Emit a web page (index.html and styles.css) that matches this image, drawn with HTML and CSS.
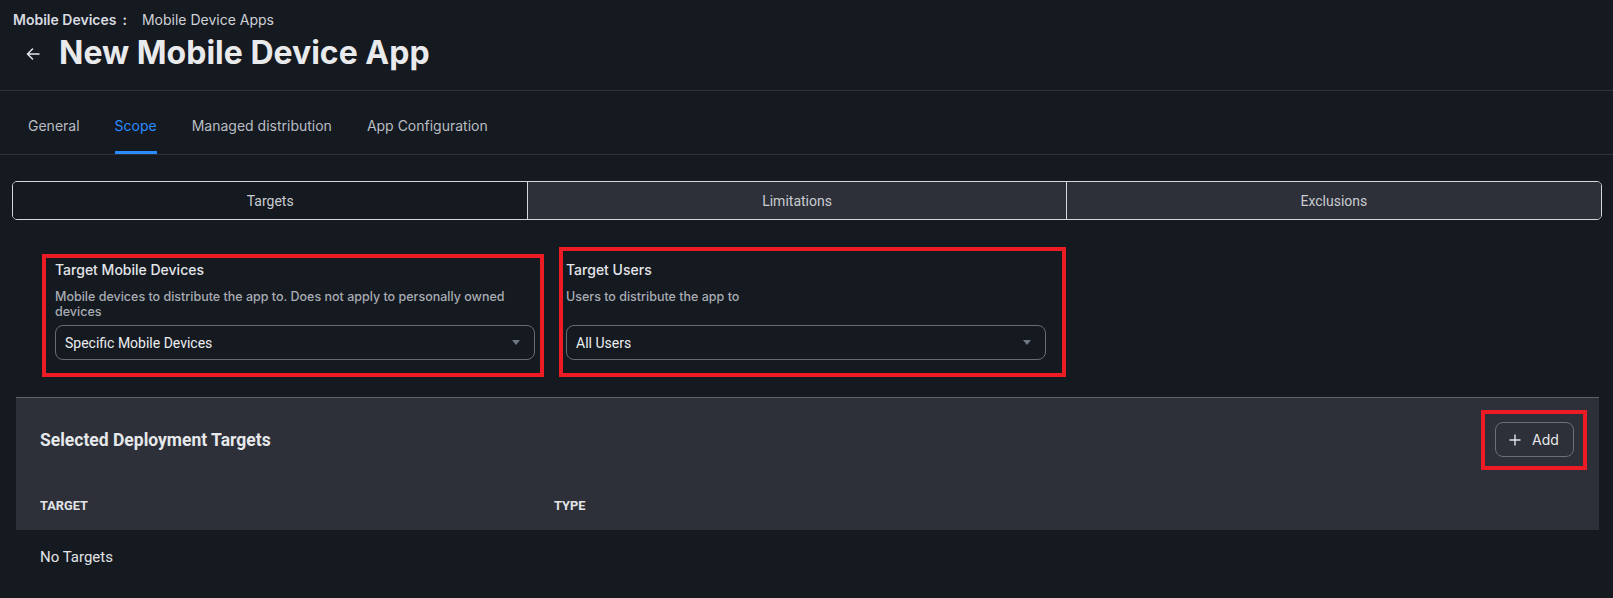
FILE: index.html
```html
<!DOCTYPE html>
<html lang="en">
<head>
<meta charset="utf-8">
<title>New Mobile Device App</title>
<link rel="stylesheet" href="styles.css">
</head>
<body>
<header class="header">
  <div class="crumbs"><span class="crumb-parent">Mobile Devices</span><span class="crumb-sep">:</span><span class="crumb-child">Mobile Device Apps</span></div>
  <div class="title-row">
    <svg class="back" width="14" height="12" viewBox="0 0 14 12" aria-hidden="true"><path d="M13 6H1.5M6.5 1L1.5 6l5 5" fill="none" stroke="#e4e6ea" stroke-width="1.5" stroke-linecap="round" stroke-linejoin="round"/></svg>
    <h1 class="title">New Mobile Device App</h1>
  </div>
</header>
<nav class="tabs">
  <div class="tab">General</div>
  <div class="tab active">Scope</div>
  <div class="tab">Managed distribution</div>
  <div class="tab">App Configuration</div>
</nav>
<div class="segmented">
  <div class="seg selected">Targets</div>
  <div class="seg">Limitations</div>
  <div class="seg">Exclusions</div>
</div>
<section class="fields">
  <div class="field">
    <div class="field-label">Target Mobile Devices</div>
    <div class="field-desc">Mobile devices to distribute the app to. Does not apply to personally owned devices</div>
    <div class="select"><span>Specific Mobile Devices</span><span class="caret"></span></div>
    <div class="mark mark-1"></div>
  </div>
  <div class="field">
    <div class="field-label">Target Users</div>
    <div class="field-desc">Users to distribute the app to</div>
    <div class="select"><span>All Users</span><span class="caret"></span></div>
    <div class="mark mark-2"></div>
  </div>
</section>
<section class="panel">
  <div class="panel-head">
    <h2 class="panel-title">Selected Deployment Targets</h2>
    <div class="add-wrap">
      <button class="add-btn"><svg width="12" height="12" viewBox="0 0 12 12" aria-hidden="true"><path d="M6 0.5v11M0.5 6h11" stroke="#e2e4e8" stroke-width="1.4" fill="none"/></svg><span>Add</span></button>
      <div class="mark mark-3"></div>
    </div>
  </div>
  <div class="table-head">
    <div>TARGET</div>
    <div>TYPE</div>
  </div>
</section>
<div class="empty">No Targets</div>
</body>
</html>
```
FILE: styles.css
```css
* { box-sizing: border-box; }
html, body { margin: 0; padding: 0; }
body {
  background: #151920;
  color: #e6e8eb;
  font-family: Inter, "Noto Sans", sans-serif;
  width: 1613px;
  height: 598px;
  overflow: hidden;
}
.header {
  padding: 10px 13px 19px;
  border-bottom: 1px solid #2e3239;
}
.crumbs {
  font-size: 14px;
  line-height: 20px;
  display: flex;
  align-items: center;
}
.crumb-parent { font-weight: 600; color: #d8dbe0; }
.crumb-sep { font-weight: 600; color: #d8dbe0; margin: 0 15px 0 6px; }
.crumb-child { color: #cfd2d7; }
.title-row {
  display: flex;
  align-items: center;
  margin-top: 5px;
  padding-left: 13px;
}
.back { flex: none; margin-right: 19px; margin-top: 2px; }
.title {
  margin: 0;
  font-size: 32px;
  line-height: 36px;
  font-weight: 700;
  color: #e9eaec;
}
.tabs {
  display: flex;
  gap: 35px;
  padding-left: 28px;
  border-bottom: 1px solid #2e3239;
  height: 64px;
}
.tab {
  font-size: 14px;
  line-height: 20px;
  padding-top: 25px;
  color: #b9bdc3;
  border-bottom: 3px solid transparent;
}
.tab.active { color: #2b8cff; border-bottom-color: #2b8cff; }
.segmented {
  display: flex;
  margin: 26px 11px 0 12px;
  height: 39px;
  border: 1px solid #d6d7d9;
  border-radius: 5px;
  overflow: hidden;
  font-family: Roboto, "Liberation Sans", sans-serif;
  font-size: 14px;
  color: #c9ccd1;
}
.seg {
  flex: 1 1 auto;
  display: flex;
  align-items: center;
  justify-content: center;
  background: #2d3038;
  border-left: 1px solid #d6d7d9;
}
.seg:first-child { border-left: 0; }
.seg.selected { background: #151920; }
.fields {
  display: flex;
  gap: 31px;
  padding: 40px 0 0 55px;
}
.field {
  position: relative;
  width: 480px;
}
.field-label {
  font-size: 14px;
  line-height: 20px;
  font-weight: 500;
  color: #e4e6ea;
}
.field-desc {
  margin-top: 9px;
  font-size: 12.5px;
  line-height: 15px;
  font-weight: 500;
  color: #a8acb3;
  min-height: 30px;
}
.select {
  margin-top: 6px;
  height: 35px;
  border: 1px solid #686b72;
  border-radius: 8px;
  display: flex;
  align-items: center;
  justify-content: space-between;
  padding: 0 14px 0 9px;
  font-family: Roboto, "Liberation Sans", sans-serif;
  font-size: 14px;
  color: #eceef1;
}
.caret {
  width: 0;
  height: 0;
  border-left: 4.5px solid transparent;
  border-right: 4.5px solid transparent;
  border-top: 5px solid #6f7686;
}
.mark {
  position: absolute;
  border: 4px solid #ed1c24;
  pointer-events: none;
}
.mark-1 { left: -13px; right: -9px; top: -6px; bottom: -17px; }
.mark-2 { left: -7px; right: -20px; top: -13px; bottom: -17px; }
.panel {
  margin: 37px 14px 0 16px;
  background: #2d3038;
  border-top: 1px solid #5e6168;
}
.panel-head {
  height: 83px;
  display: flex;
  align-items: center;
  justify-content: space-between;
  padding: 0 25px 0 24px;
}
.panel-title {
  margin: 0;
  font-family: Roboto, "Liberation Sans", sans-serif;
  font-size: 17.5px;
  font-weight: 700;
  color: #e6e8eb;
}
.add-wrap { position: relative; }
.add-btn {
  display: flex;
  align-items: center;
  gap: 11px;
  height: 35px;
  width: 79px;
  padding: 0 0 0 13px;
  background: transparent;
  border: 1px solid #6c6f76;
  border-radius: 8px;
  font-family: Inter, sans-serif;
  font-size: 14px;
  color: #e6e8eb;
}
.mark-3 { left: -14px; right: -13px; top: -12px; bottom: -13px; }
.table-head {
  display: grid;
  grid-template-columns: 514px 1fr;
  height: 49px;
  align-items: center;
  padding-left: 24px;
  font-family: Roboto, "Liberation Sans", sans-serif;
  font-size: 12.8px;
  font-weight: 700;
  color: #e2e4e8;
}
.empty {
  padding: 17px 0 0 40px;
  font-family: Roboto, "Liberation Sans", sans-serif;
  font-size: 15px;
  line-height: 20px;
  color: #e2e4e8;
}
```
